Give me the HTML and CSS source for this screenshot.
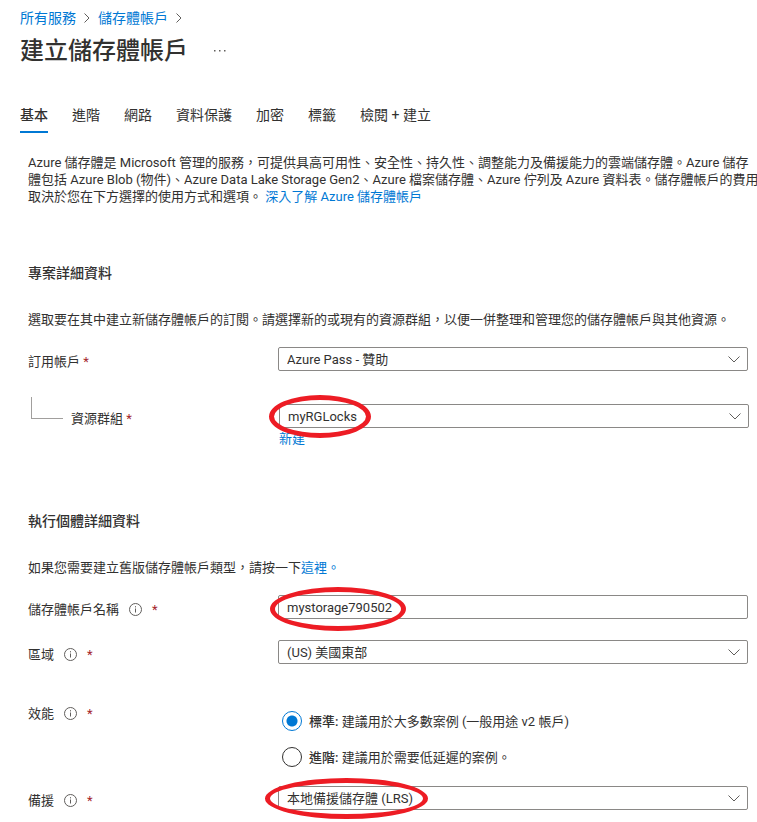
FILE: index.html
```html
<!DOCTYPE html>
<html lang="zh-Hant">

<head>
    <meta charset="UTF-8">
    <meta name="viewport" content="width=device-width, initial-scale=1.0">
    <title>建立儲存體帳戶</title>
    <link rel="stylesheet" href="styles.css">
</head>

<body>
    <header>
        <nav class="breadcrumb">
            <a href="#">所有服務</a>
            <svg class="crumb-arrow" viewBox="0 0 6 10"><path d="M0.5 0.5 L5 5 L0.5 9.5" /></svg>
            <a href="#">儲存體帳戶</a>
            <svg class="crumb-arrow" viewBox="0 0 6 10"><path d="M0.5 0.5 L5 5 L0.5 9.5" /></svg>
        </nav>
        <div class="title-row">
            <h1>建立儲存體帳戶</h1>
            <button class="more" type="button" aria-label="更多">
                <svg viewBox="0 0 12 2"><path d="M0 0h1.5v1.5H0zM5 0h1.5v1.5H5zM10 0h1.5v1.5H10z" /></svg>
            </button>
        </div>
        <nav class="tabs">
            <a class="tab active" href="#">基本</a>
            <a class="tab" href="#">進階</a>
            <a class="tab" href="#">網路</a>
            <a class="tab" href="#">資料保護</a>
            <a class="tab" href="#">加密</a>
            <a class="tab" href="#">標籤</a>
            <a class="tab" href="#">檢閱 + 建立</a>
        </nav>
    </header>

    <main>
        <p class="intro">Azure 儲存體是 Microsoft 管理的服務，可提供具高可用性、安全性、持久性、調整能力及備援能力的雲端儲存體。Azure 儲存<br>體包括 Azure Blob (物件)、Azure Data Lake Storage Gen2、Azure 檔案儲存體、Azure 佇列及 Azure 資料表。儲存體帳戶的費用<br>取決於您在下方選擇的使用方式和選項。 <a href="#">深入了解 Azure 儲存體帳戶</a></p>

        <!-- Project details -->
        <section>
            <h2>專案詳細資料</h2>
            <p>選取要在其中建立新儲存體帳戶的訂閱。請選擇新的或現有的資源群組，以便一併整理和管理您的儲存體帳戶與其他資源。</p>

            <div class="row">
                <div class="label-cell">
                    <label for="subscription">訂用帳戶 <span class="required">*</span></label>
                </div>
                <div class="field">
                    <select id="subscription">
                        <option>Azure Pass - 贊助</option>
                    </select>
                    <svg class="chevron" viewBox="0 0 12 7"><path d="M0.5 0.5 L6 6 L11.5 0.5" /></svg>
                </div>
            </div>

            <div class="row child-row">
                <div class="label-cell">
                    <span class="tree-line"></span>
                    <label for="resource-group">資源群組 <span class="required">*</span></label>
                </div>
                <div class="field">
                    <select id="resource-group">
                        <option>myRGLocks</option>
                    </select>
                    <svg class="chevron" viewBox="0 0 12 7"><path d="M0.5 0.5 L6 6 L11.5 0.5" /></svg>
                    <span class="mark mark-group"></span>
                </div>
                <a class="new-link" href="#">新建</a>
            </div>
        </section>

        <!-- Instance details -->
        <section>
            <h2>執行個體詳細資料</h2>
            <p>如果您需要建立舊版儲存體帳戶類型，請按一下<a href="#">這裡。</a></p>

            <div class="row">
                <div class="label-cell">
                    <label for="account-name">儲存體帳戶名稱</label>
                    <svg class="info" viewBox="0 0 13 13"><circle cx="6.5" cy="6.5" r="6" /><path d="M6.5 5.5v4M6.5 3.2v1.2" /></svg>
                    <span class="required">*</span>
                </div>
                <div class="field">
                    <input type="text" id="account-name" value="mystorage790502">
                    <span class="mark mark-name"></span>
                </div>
            </div>

            <div class="row">
                <div class="label-cell">
                    <label for="region">區域</label>
                    <svg class="info" viewBox="0 0 13 13"><circle cx="6.5" cy="6.5" r="6" /><path d="M6.5 5.5v4M6.5 3.2v1.2" /></svg>
                    <span class="required">*</span>
                </div>
                <div class="field">
                    <select id="region">
                        <option>(US) 美國東部</option>
                    </select>
                    <svg class="chevron" viewBox="0 0 12 7"><path d="M0.5 0.5 L6 6 L11.5 0.5" /></svg>
                </div>
            </div>

            <div class="row radio-row" role="radiogroup" aria-labelledby="performance">
                <div class="label-cell">
                    <span id="performance">效能</span>
                    <svg class="info" viewBox="0 0 13 13"><circle cx="6.5" cy="6.5" r="6" /><path d="M6.5 5.5v4M6.5 3.2v1.2" /></svg>
                    <span class="required">*</span>
                </div>
                <div class="options">
                    <label class="option"><input type="radio" name="performance" checked><span><b>標準:</b> 建議用於大多數案例 (一般用途 v2 帳戶)</span></label>
                    <label class="option"><input type="radio" name="performance"><span><b>進階:</b> 建議用於需要低延遲的案例。</span></label>
                </div>
            </div>

            <div class="row">
                <div class="label-cell">
                    <label for="redundancy">備援</label>
                    <svg class="info" viewBox="0 0 13 13"><circle cx="6.5" cy="6.5" r="6" /><path d="M6.5 5.5v4M6.5 3.2v1.2" /></svg>
                    <span class="required">*</span>
                </div>
                <div class="field">
                    <select id="redundancy">
                        <option>本地備援儲存體 (LRS)</option>
                    </select>
                    <svg class="chevron" viewBox="0 0 12 7"><path d="M0.5 0.5 L6 6 L11.5 0.5" /></svg>
                    <span class="mark mark-redundancy"></span>
                </div>
            </div>
        </section>
    </main>
</body>

</html>
```
FILE: styles.css
```css
body {
    font-family: Roboto, "Noto Sans CJK TC", sans-serif;
    font-size: 13px;
    line-height: 17px;
    margin: 0;
    padding: 8px 0 12px;
    color: #323130;
    background-color: #ffffff;
}

a {
    color: #0078d4;
    text-decoration: none;
}

h1,
h2,
p {
    margin: 0;
}

header {
    padding-left: 20px;
}

.breadcrumb {
    display: flex;
    align-items: center;
    gap: 8px;
    font-size: 14px;
    line-height: 20px;
}

.crumb-arrow {
    width: 6px;
    height: 10px;
    fill: none;
    stroke: #605e5c;
}

.title-row {
    display: flex;
    align-items: center;
    gap: 26px;
    margin-top: 7px;
}

h1 {
    font-size: 24px;
    line-height: 32px;
    font-weight: 500;
}

.more {
    display: flex;
    padding: 0;
    border: none;
    background: none;
    cursor: pointer;
}

.more svg {
    width: 12px;
    height: 2px;
    fill: #605e5c;
}

.tabs {
    display: flex;
    gap: 24px;
    margin-top: 38px;
    font-size: 14px;
    line-height: 20px;
}

.tab {
    color: #323130;
    padding-bottom: 6px;
    border-bottom: 2px solid transparent;
}

.tab.active {
    font-weight: 500;
    border-bottom-color: #0078d4;
}

main {
    padding-left: 28px;
}

.intro {
    margin-top: 21px;
    white-space: nowrap;
}

section {
    margin-top: 58px;
}

section + section {
    margin-top: 64px;
}

h2 {
    font-size: 14px;
    line-height: 20px;
    font-weight: 500;
    margin-bottom: 28px;
}

/* Form rows: label on the left, control on the right */
.row {
    display: grid;
    grid-template-columns: 250px 1fr;
    margin-top: 19px;
    padding-right: 9px;
}

.row + .row {
    margin-top: 21px;
}

.row + .child-row {
    margin-top: 33px;
    padding-right: 8px;
    grid-template-columns: 251px 1fr;
}

.label-cell {
    display: flex;
    align-items: center;
    gap: 10px;
    height: 24px;
    padding-top: 4px;
    box-sizing: border-box;
}

.required {
    color: #a4262c;
}

.info {
    width: 13px;
    height: 13px;
    fill: none;
    stroke: #605e5c;
}

.tree-line {
    align-self: flex-end;
    width: 32px;
    height: 22px;
    margin-left: 3px;
    margin-bottom: 9px;
    margin-right: -2px;
    border-left: 1px solid #a19f9d;
    border-bottom: 1px solid #a19f9d;
    box-sizing: border-box;
}

.field {
    position: relative;
    display: grid;
    align-items: center;
    height: 24px;
}

.field select,
.field input,
.chevron {
    grid-area: 1 / 1;
}

.field select,
.field input {
    width: 100%;
    height: 24px;
    padding: 0 8px;
    border: 1px solid #8a8886;
    border-radius: 2px;
    box-sizing: border-box;
    background-color: #ffffff;
    color: #323130;
    font: inherit;
    appearance: none;
}

.chevron {
    justify-self: end;
    width: 12px;
    height: 7px;
    margin-right: 8px;
    fill: none;
    stroke: #605e5c;
    pointer-events: none;
}

.new-link {
    grid-column: 2;
    justify-self: start;
    margin-top: 2px;
}

.row + .radio-row {
    margin-top: 35px;
}

.radio-row + .row {
    margin-top: 19px;
}

.options {
    display: flex;
    flex-direction: column;
    gap: 16px;
    padding: 12px 0 0 4px;
}

.option {
    display: flex;
    align-items: center;
    gap: 7px;
    height: 20px;
}

.option b {
    font-weight: 500;
}

.option input {
    appearance: none;
    width: 20px;
    height: 20px;
    margin: 0;
    border: 1px solid #323130;
    border-radius: 50%;
    box-sizing: border-box;
}

.option input:checked {
    border-color: #0078d4;
    background: radial-gradient(circle, #0078d4 5px, #ffffff 6px);
}

/* Red rings over the values to fill in */
.mark {
    position: absolute;
    border: 5px solid #ed1c24;
    border-radius: 50%;
    box-sizing: border-box;
    pointer-events: none;
}

.mark-group {
    left: -10px;
    top: -9px;
    width: 102px;
    height: 43px;
}

.mark-name {
    left: -8px;
    top: -8px;
    width: 136px;
    height: 44px;
}

.mark-redundancy {
    left: -13px;
    top: -8px;
    width: 163px;
    height: 41px;
}
```
